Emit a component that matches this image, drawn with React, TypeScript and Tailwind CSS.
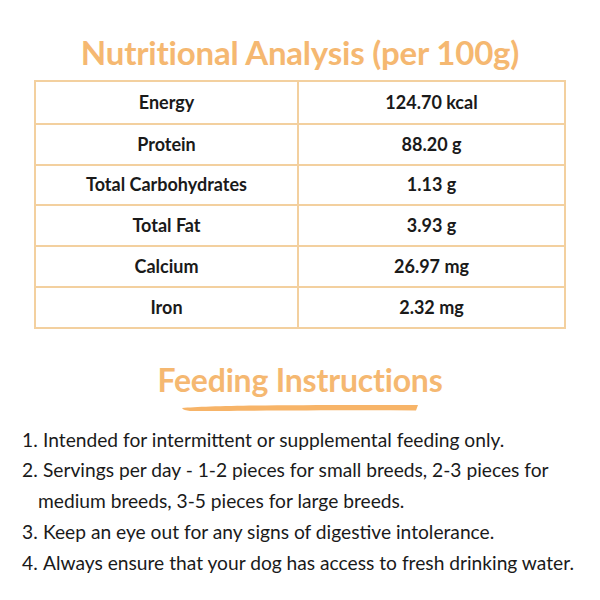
const rows = [
  ['Energy', '124.70 kcal'],
  ['Protein', '88.20 g'],
  ['Total Carbohydrates', '1.13 g'],
  ['Total Fat', '3.93 g'],
  ['Calcium', '26.97 mg'],
  ['Iron', '2.32 mg'],
];

const steps = [
  'Intended for intermittent or supplemental feeding only.',
  'Servings per day - 1-2 pieces for small breeds, 2-3 pieces for medium breeds, 3-5 pieces for large breeds.',
  'Keep an eye out for any signs of digestive intolerance.',
  'Always ensure that your dog has access to fresh drinking water.',
];

export default function App() {
  return (
    <div className="w-[600px] h-[600px] bg-white font-['Lato',sans-serif] text-[#1a1a1a] overflow-hidden">
      {/* Nutrition */}
      <h1 className="pt-[31px] text-center text-[33px] leading-[42px] font-bold text-[#f5b871] tracking-[-0.2px]">
        Nutritional Analysis (per 100g)
      </h1>
      <div className="mx-[34px] mt-[7px] border-2 border-[#f3d09f]">
        {rows.map(([label, value], i) => (
          <div
            key={label}
            className={`grid grid-cols-[263px_1fr] h-[40.8px] text-[18px] font-bold ${i > 0 ? 'border-t-2 border-[#f3d09f]' : ''}`}
          >
            <div className="flex items-center justify-center border-r-2 border-[#f3d09f]">{label}</div>
            <div className="flex items-center justify-center">{value}</div>
          </div>
        ))}
      </div>

      {/* Feeding */}
      <div className="mt-[31px] flex flex-col items-center">
        <h2 className="text-[32px] leading-[40px] font-bold text-[#f5b871] tracking-[-0.2px]">
          Feeding Instructions
        </h2>
        <svg width="240" height="9" viewBox="0 0 240 9" className="mt-[3px]">
          <path d="M2 5 C30 2.5 120 1.5 238 2 L236 7.5 C150 7 60 8 10 8 C6 7.5 3 7 2 5 Z" fill="#f7b468" />
        </svg>
      </div>
      <ol className="mt-[13px] pl-[22px] pr-[14px] text-[19.2px] leading-[30.7px]">
        {steps.map((s, i) => (
          <li key={i} className="pl-[16px] -indent-[16px]">
            <span className="inline-block w-[21px] indent-0">{i + 1}.</span>
            {s}
          </li>
        ))}
      </ol>
    </div>
  );
}
